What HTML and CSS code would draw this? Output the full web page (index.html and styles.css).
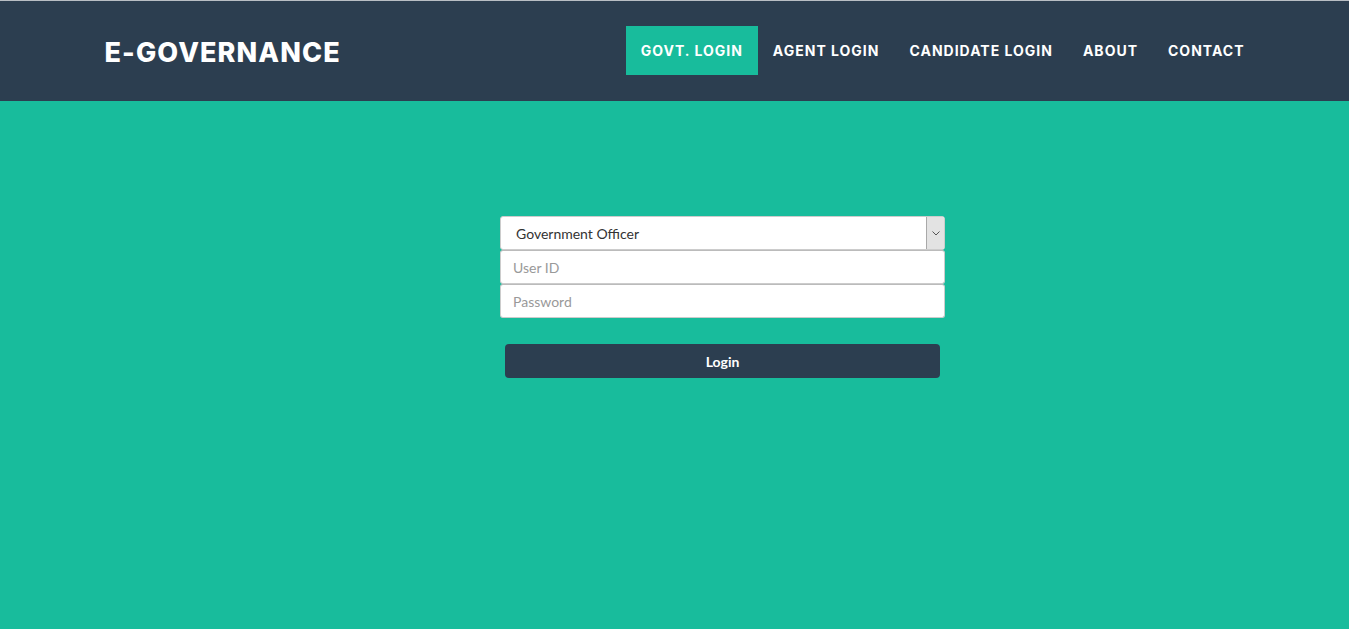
FILE: index.html
```html
<!DOCTYPE html>
<html lang="en">
<head>
<meta charset="utf-8">
<title>E-Governance</title>
<link rel="stylesheet" href="styles.css">
</head>
<body>
<header class="navbar">
  <div class="container nav-inner">
    <a class="brand" href="#">E-GOVERNANCE</a>
    <ul class="nav-links">
      <li><a class="active" href="#">GOVT. LOGIN</a></li>
      <li><a href="#">AGENT LOGIN</a></li>
      <li><a href="#">CANDIDATE LOGIN</a></li>
      <li><a href="#">ABOUT</a></li>
      <li><a href="#">CONTACT</a></li>
    </ul>
  </div>
</header>
<main class="main">
  <form class="login-form">
    <div class="select-wrap">
      <select class="field select">
        <option>Government Officer</option>
      </select>
      <span class="select-arrow"><svg width="8" height="5" viewBox="0 0 8 5"><path d="M0.5 0.5 L4 4 L7.5 0.5" fill="none" stroke="#555" stroke-width="1"/></svg></span>
    </div>
    <input class="field" type="text" placeholder="User ID">
    <input class="field" type="password" placeholder="Password">
    <button class="btn" type="button">Login</button>
  </form>
</main>
</body>
</html>
```
FILE: styles.css
```css
html, body {
  margin: 0;
  padding: 0;
}
body {
  background: #18bc9c;
  font-family: Lato, "Open Sans", sans-serif;
  border-top: 1px solid #b9bec4;
  min-height: 628px;
}
.navbar {
  background: #2c3e50;
  height: 100px;
}
.container {
  width: 1170px;
  margin: 0 auto;
  padding: 0 15px;
  box-sizing: border-box;
}
.nav-inner {
  display: flex;
  align-items: center;
  justify-content: space-between;
  height: 100px;
}
.brand {
  color: #fff;
  text-decoration: none;
  font-family: Inter, "DejaVu Sans", sans-serif;
  font-weight: 800;
  font-size: 27px;
  letter-spacing: 1.1px;
  margin-top: 2px;
}
.nav-links {
  list-style: none;
  display: flex;
  margin: -2px -15px 0 0;
  padding: 0;
}
.nav-links a {
  display: block;
  padding: 16px 15px 15px;
  color: #fff;
  text-decoration: none;
  font-family: Inter, "DejaVu Sans", sans-serif;
  font-weight: 700;
  font-size: 14px;
  letter-spacing: 1px;
  line-height: 18px;
}
.nav-links a.active {
  background: #18bc9c;
}
.main {
  display: flex;
  justify-content: center;
  padding: 115px 0 0 96px;
}
.login-form {
  width: 445px;
  display: flex;
  flex-direction: column;
}
.select-wrap {
  position: relative;
}
.field {
  display: block;
  width: 100%;
  box-sizing: border-box;
  height: 34px;
  border: 1px solid #ccc;
  border-radius: 3px;
  background: #fff;
  font-family: Lato, sans-serif;
  font-size: 14px;
  color: #555;
  padding: 0 12px;
  outline: none;
  margin: 0;
}
.field::placeholder {
  color: #999;
}
.select {
  appearance: none;
  -webkit-appearance: none;
  padding-left: 15px;
  color: #333;
}
.select-arrow {
  position: absolute;
  right: 1px;
  top: 1px;
  width: 17px;
  height: 32px;
  background: #e3e3e3;
  border-left: 1px solid #a9a9a9;
  display: flex;
  align-items: center;
  justify-content: center;
  pointer-events: none;
}
input.field {
  border-top-color: #bbb;
}
.btn {
  margin: 26px 5px 0;
  height: 34px;
  border: none;
  border-radius: 4px;
  background: #2c3e50;
  color: #fff;
  font-family: Lato, sans-serif;
  font-weight: 700;
  font-size: 14px;
  cursor: pointer;
}
```
